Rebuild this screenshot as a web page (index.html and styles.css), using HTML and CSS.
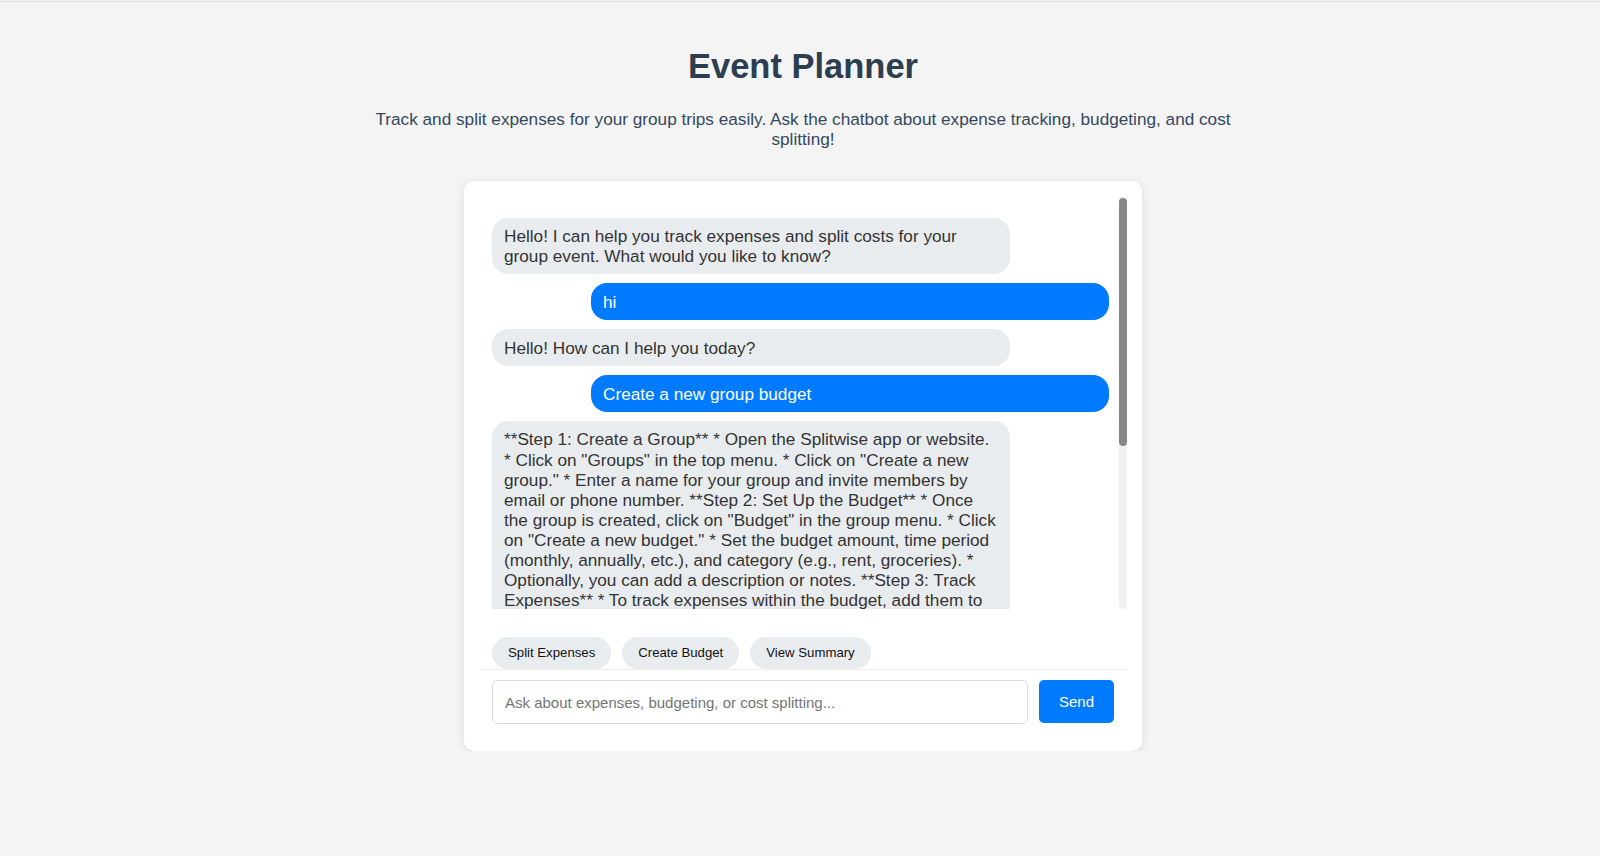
FILE: index.html
```html
<!DOCTYPE html>
<html lang="en">
<head>
<meta charset="utf-8">
<title>Event Planner</title>
<link rel="stylesheet" href="styles.css">
</head>
<body>
<div class="page">
  <header class="intro">
    <h1 class="title">Event Planner</h1>
    <p class="subtitle">Track and split expenses for your group trips easily. Ask the chatbot about expense tracking, budgeting, and cost splitting!</p>
  </header>

  <section class="chat-card">
    <div class="messages">
      <div class="message-list">
        <div class="msg bot">Hello! I can help you track expenses and split costs for your group event. What would you like to know?</div>
        <div class="msg user">hi</div>
        <div class="msg bot">Hello! How can I help you today?</div>
        <div class="msg user">Create a new group budget</div>
        <div class="msg bot">**Step 1: Create a Group** * Open the Splitwise app or website. * Click on "Groups" in the top menu. * Click on "Create a new group." * Enter a name for your group and invite members by email or phone number. **Step 2: Set Up the Budget** * Once the group is created, click on "Budget" in the group menu. * Click on "Create a new budget." * Set the budget amount, time period (monthly, annually, etc.), and category (e.g., rent, groceries). * Optionally, you can add a description or notes. **Step 3: Track Expenses** * To track expenses within the budget, add them to the group as usual. * Splitwise will automatically track your spending against the budget. * You can view your progress by clicking on "Budget" in the group menu. **Step 4: Review and Adjust** * Regularly check your budget to see how much you've spent and how much is remaining. * If needed, adjust the budget amount or category to better fit your group's needs. * You can also set up notifications to alert you when you're close to exceeding your budget. **Tips:** * Make sure all group members are added to the group before creating the budget. * Encourage members to add expenses promptly so the budget stays accurate.</div>
      </div>
      <div class="scrollbar" aria-hidden="true">
        <div class="scrollbar-thumb"></div>
      </div>
    </div>

    <div class="quick-actions">
      <button class="pill" type="button">Split Expenses</button>
      <button class="pill" type="button">Create Budget</button>
      <button class="pill" type="button">View Summary</button>
    </div>

    <form class="composer" onsubmit="return false;">
      <input class="composer-input" type="text" placeholder="Ask about expenses, budgeting, or cost splitting...">
      <button class="send-btn" type="submit">Send</button>
    </form>
  </section>
</div>
</body>
</html>
```

FILE: styles.css
```css
* {
  box-sizing: border-box;
}

html {
  background: #f4f4f4;
}

body {
  margin: 0;
  padding: 0 0 0 6px;
  border-top: 1px solid #dedede;
  margin-top: 1px;
  background: #f4f4f4;
  font-family: "Liberation Sans", Arial, sans-serif;
  color: #2c3e50;
}

.page {
  display: flex;
  flex-direction: column;
  align-items: center;
}

.intro {
  max-width: 900px;
  text-align: center;
}

.title {
  margin: 45px 0 0;
  font-size: 34.5px;
  line-height: 39px;
  font-weight: bold;
  color: #2c3e50;
}

.subtitle {
  margin: 22.5px 0 0;
  font-size: 17.2px;
  line-height: 20.5px;
  color: #34495e;
}

.chat-card {
  width: 678px;
  margin-top: 31.5px;
  padding: 16px 15px 17px 18px;
  background: #ffffff;
  border-radius: 10px;
  box-shadow: 0 2px 10px rgba(0, 0, 0, 0.1);
}

.messages {
  display: flex;
  height: 412px;
}

.message-list {
  flex: 1;
  min-width: 0;
  padding: 11.5px 10px 10px;
  overflow: hidden;
}

.scrollbar {
  flex: 0 0 8px;
  display: flex;
  flex-direction: column;
  padding-top: 1px;
  background: #f1f1f1;
  border-radius: 4px;
}

.scrollbar-thumb {
  height: 248px;
  background: #888888;
  border-radius: 4px;
}

.msg {
  box-sizing: content-box;
  width: 494px;
  margin: 9px 0;
  padding: 8.4px 12px;
  border-radius: 16px;
  font-size: 17.2px;
  line-height: 20.1px;
}

.msg.bot {
  background: #e9ecef;
  color: #333333;
  margin-right: auto;
}

.msg.user {
  background: #007bff;
  color: #ffffff;
  margin-left: auto;
}

.quick-actions {
  display: flex;
  align-items: flex-start;
  gap: 11px;
  padding: 28px 10px 0;
}

.pill {
  padding: 8px 16px;
  border: none;
  border-radius: 16px;
  background: #e9ecef;
  color: #111111;
  font-family: "Liberation Sans", Arial, sans-serif;
  font-size: 13.2px;
  line-height: 15.5px;
  cursor: pointer;
}

.composer {
  display: flex;
  gap: 11px;
  padding: 10.5px 13px 10px 10px;
  border-top: 1px solid #eeeeee;
}

.composer-input {
  flex: 1;
  height: 44px;
  padding: 0 12px;
  border: 1px solid #dddddd;
  border-radius: 5px;
  font-family: "Liberation Sans", Arial, sans-serif;
  font-size: 15px;
  color: #333333;
  outline: none;
}

.composer-input::placeholder {
  color: #757575;
}

.send-btn {
  width: 75px;
  height: 43px;
  border: none;
  border-radius: 5px;
  background: #007bff;
  color: #ffffff;
  font-family: "Liberation Sans", Arial, sans-serif;
  font-size: 15px;
  cursor: pointer;
}
```
